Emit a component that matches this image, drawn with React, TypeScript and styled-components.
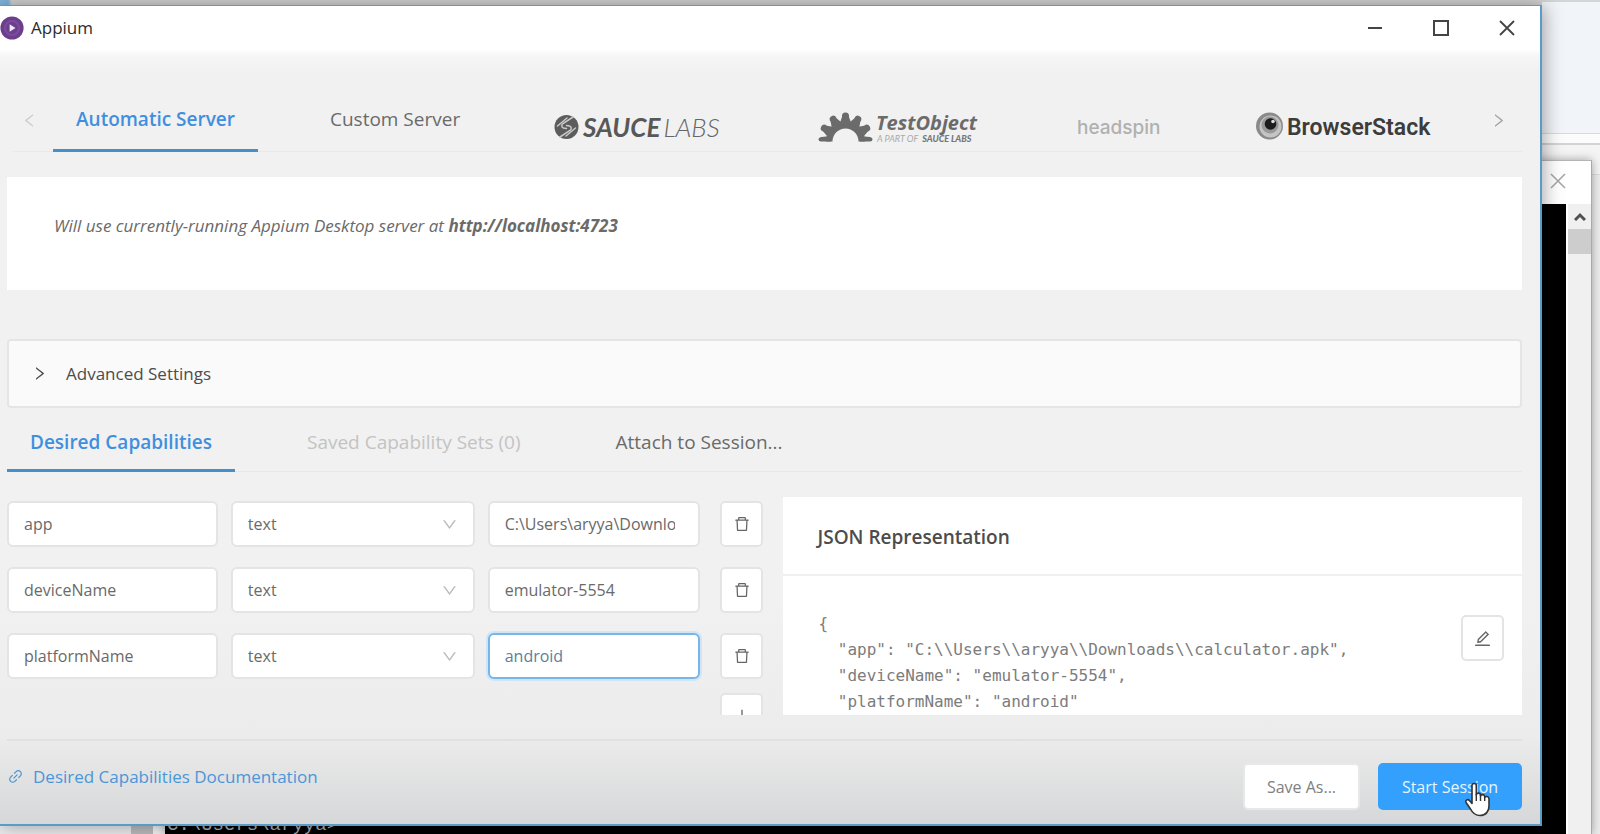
import React from "react";
import styled, { createGlobalStyle, css } from "styled-components";
import {
  AiOutlineDelete,
  AiOutlineDown,
  AiOutlineEdit,
  AiOutlineLeft,
  AiOutlineLink,
  AiOutlinePlus,
  AiOutlineRight,
} from "react-icons/ai";

const GlobalStyle = createGlobalStyle`
  *, *::before, *::after { box-sizing: border-box; }
  body {
    margin: 0;
    overflow: hidden;
    font-family: "Open Sans", "Noto Sans", sans-serif;
    font-size: 16px;
    color: #6a6a6a;
  }
  button, input, select { font: inherit; color: inherit; }
  h2, p, pre { margin: 0; }
`;

const Desktop = styled.div`
  position: relative;
  height: 100vh;
  min-height: 700px;
  padding: 5px 58px 8px 0;
  overflow: hidden;
  background: linear-gradient(#d3d5d6 0 2px, #f1f4f8 2px 133px, #d9dadb 133px 134px, #fcfcfc 134px 143px, #d2d3d4 143px 145px, #f4f4f4 145px 174px, #dcdcdc 174px 175px, #ececec 175px);
`;

const TopStrip = styled.div`
  position: absolute;
  inset: 0 58px auto 0;
  height: 5px;
  background: linear-gradient(90deg, #7fb4dc 0 8px, #d4d4d4 12px);
`;

const BackPane = styled.div`
  position: absolute;
  left: 0;
  bottom: 0;
  width: 165px;
  height: 12px;
  background: linear-gradient(90deg, #e9ebec 0 131px, #b9bbbc 131px 153px, #f4f4f4 153px);
`;

const ConsoleWindow = styled.section`
  position: absolute;
  inset: 160px 8px 0 165px;
  display: flex;
  flex-direction: column;
  background: #fff;
  border-top: 1px solid #b5b5b5;
  border-right: 1px solid #a9a9a9;
  box-shadow: 0 0 9px rgba(0, 0, 0, 0.35);
`;

const ConsoleTitle = styled.div`
  display: flex;
  justify-content: flex-end;
  align-items: center;
  height: 43px;
  padding: 0 24px 4px 0;
  color: #a5a5a5;
`;

const ConsoleBody = styled.div`
  flex: 1;
  display: flex;
  min-height: 0;
`;

const ConsoleScreen = styled.div`
  flex: 1;
  display: flex;
  align-items: flex-end;
  padding-left: 2px;
  background: #000;
  color: #a5adb5;
  font: 19px/17px "Liberation Mono", monospace;
`;

const ConsoleScroll = styled.div`
  width: 25px;
  background: #f0f0f0;
  border-left: 2px solid #fff;
  color: #505050;
`;

const ScrollArrow = styled.div`
  display: grid;
  place-items: center;
  height: 25px;
`;

const ScrollThumb = styled.div`
  height: 25px;
  background: #cdcdcd;
`;

const BareButton = styled.button`
  display: grid;
  place-items: center;
  padding: 0;
  border: 0;
  background: none;
`;

const AppWindow = styled.main`
  position: relative;
  display: flex;
  flex-direction: column;
  height: 100%;
  border: solid #5b9bc8;
  border-width: 1px 2px 2px 0;
  background: linear-gradient(#fff 0 43px, #f6f6f6 50px, #f1f1f1 66px, #f1f1f1 600px, #ececec 730px, #d6d7d8 100%);
  box-shadow: 2px 0 18px rgba(0, 0, 0, 0.35);
`;

const TitleBar = styled.header`
  display: flex;
  align-items: center;
  justify-content: space-between;
  height: 43px;
  color: #2c2c2c;
  font-size: 17px;
`;

const AppName = styled.div`
  display: flex;
  align-items: center;
  gap: 7px;
`;

const WindowControls = styled.div`
  display: flex;
  ${BareButton} {
    width: 66px;
    height: 40px;
  }
`;

const Content = styled.div`
  flex: 1;
  display: flex;
  flex-direction: column;
  min-height: 0;
  padding: 24px 18px 14px 7px;
`;

const ServerBar = styled.nav`
  display: flex;
  height: 79px;
  margin: 0 0 25px 6px;
  border-bottom: 1px solid #e9e9e9;
`;

const Arrow = styled(BareButton)<{ $faded?: boolean }>`
  flex: none;
  width: 32px;
  height: 94px;
  color: ${(p) => (p.$faded ? "#ccc" : "#a2a2a2")};
  &:last-child { margin-right: 8px; }
`;

const TabList = styled.div`
  flex: 1;
  display: flex;
  gap: 49px;
  min-width: 0;
`;

const Tab = styled.button<{ $active?: boolean; $muted?: boolean }>`
  flex: none;
  display: flex;
  align-items: flex-start;
  padding: 22px 23px 0;
  border: 0;
  border-bottom: 3px solid transparent;
  background: none;
  font-size: 19px;
  line-height: 24px;
  white-space: nowrap;
  color: ${(p) => (p.$muted ? "#c3c3c3" : "#6a6a6a")};
  ${(p) =>
    p.$active &&
    css`
      color: #3f8fe0;
      font-weight: 600;
      border-bottom-color: #4590c8;
    `}
`;

const ServerTabs = styled(TabList)`
  margin-left: 8px;
  ${Tab} { height: 79px; padding-top: 34px; }
`;

const LogoTab = styled(Tab)`
  && { padding-top: 39px; }
  svg { display: block; overflow: visible; }
`;

const InfoCard = styled.section`
  flex: none;
  height: 113px;
  padding: 36px 47px;
  background: #fff;
  font-size: 17px;
  line-height: 26px;
  font-style: italic;
`;

const Advanced = styled.button`
  flex: none;
  display: flex;
  align-items: center;
  gap: 18px;
  height: 69px;
  margin-top: 49px;
  padding: 0 22px;
  border: 2px solid #e5e5e5;
  border-radius: 4px;
  background: #fafafa;
  font-size: 17px;
  text-align: left;
  color: #4c4c4c;
`;

const CapabilityTabs = styled(TabList)`
  flex: none;
  height: 64px;
  margin-bottom: 25px;
  border-bottom: 1px solid #e6e9e9;
  ${Tab} { height: 64px; }
`;

const Panels = styled.div`
  flex: 1;
  display: grid;
  grid-template-columns: minmax(0, 757fr) minmax(0, 739fr);
  gap: 20px;
  min-height: 0;
  overflow: hidden;
`;

const CapabilityForm = styled.form`
  display: flex;
  flex-direction: column;
  gap: 14px;
  padding-top: 4px;
`;

const CapabilityRows = styled.div`
  display: grid;
  gap: 20px;
`;

const CapabilityRow = styled.div`
  display: grid;
  grid-template-columns: 211fr 244fr 212fr 51fr;
  column-gap: 13px;
`;

const fieldBox = css`
  width: 100%;
  min-width: 0;
  height: 46px;
  padding: 0 23px 0 15px;
  border: 2px solid #e4e4e4;
  border-radius: 6px;
  outline: 0;
  background: #fff;
  font-size: 16px;
`;

const TextField = styled.input<{ $focused?: boolean }>`
  ${fieldBox}
  ${(p) =>
    p.$focused &&
    css`
      border-color: #79b5e6;
      box-shadow: 0 0 0 2px #cfe6f9;
      color: #5b7f9c;
    `}
`;

const SelectWrap = styled.div`
  display: grid;
  align-items: center;
  min-width: 0;
  > * { grid-area: 1 / 1; }
  svg {
    justify-self: end;
    margin-right: 17px;
    color: #bbb;
    pointer-events: none;
  }
`;

const SelectField = styled.select`
  ${fieldBox}
  appearance: none;
`;

const IconButton = styled(BareButton)`
  flex: none;
  width: 43px;
  height: 46px;
  border: 2px solid #e4e4e4;
  border-radius: 5px;
  background: #fff;
  color: #666;
`;

const EditButton = styled(IconButton)`
  margin-top: 4px;
`;

const RowAction = styled.div`
  display: flex;
  justify-content: flex-end;
`;

const JsonCard = styled.section`
  min-width: 0;
  background: #fff;
`;

const JsonTitle = styled.h2`
  height: 79px;
  padding: 27px 34px 0;
  border-bottom: 2px solid #f0f0f0;
  font-size: 19px;
  line-height: 26px;
  font-weight: 600;
  color: #4c4c4c;
`;

const JsonBody = styled.div`
  display: flex;
  justify-content: space-between;
  padding: 35px 18px 0 35px;
`;

const Code = styled.pre`
  font: 16px/26px "DejaVu Sans Mono", monospace;
  color: #7c7c7c;
`;

const Footer = styled.footer`
  flex: none;
  display: flex;
  align-items: center;
  gap: 18px;
  margin-top: 24px;
  padding-top: 22px;
  border-top: 2px solid #e1e1e1;
`;

const DocLink = styled.a`
  display: flex;
  align-items: center;
  gap: 9px;
  margin: 0 auto 20px 0;
  color: #4a96d9;
  font-size: 17px;
  line-height: 24px;
  text-decoration: none;
`;

const ActionButton = styled.button<{ $primary?: boolean }>`
  position: relative;
  width: ${(p) => (p.$primary ? 144 : 117)}px;
  height: 47px;
  padding: 0;
  border: 2px solid ${(p) => (p.$primary ? "#35a0fb" : "#e8e8e8")};
  border-radius: 5px;
  background: ${(p) => (p.$primary ? "#34a0fd" : "#fff")};
  color: ${(p) => (p.$primary ? "#e6f4ff" : "#808080")};
  font-size: 16px;
  white-space: nowrap;
`;

const HandCursor = styled.svg`
  position: absolute;
  left: 84px;
  top: 17px;
`;

const AppiumMark = () => (
  <svg width="24" height="24" viewBox="0 0 24 24" aria-hidden="true">
    <circle cx="12" cy="12" r="11.6" fill="#6b3f8e" />
    <circle cx="12" cy="12" r="7" fill="none" stroke="#7a4c9b" strokeWidth="2" />
    <path d="M9.6 8.300 15.500 12l-5.900 3.700z" fill="#f0e6f5" />
  </svg>
);

const SauceLogo = () => (
  <svg width="169" height="32" viewBox="0 0 169 32" role="img" aria-label="Sauce Labs">
    <circle cx="11.500" cy="15" r="12" fill="#5c5c5c" />
    <g fill="none" stroke="#c9c9c9" strokeWidth="1.500" strokeLinecap="round">
      <path d="M18 5 8 11.500c-2 1.500-1.500 4 .5 4.500l3 .5" />
      <path d="M5 25l10-6.500c2-1.500 1.500-4-.5-4.500l-3-.5" />
      <path d="M2.500 14 12 6" />
      <path d="M20.500 16 11 24" />
    </g>
    <text x="28" y="25" fontFamily="Lato, sans-serif" fontSize="26" fontWeight="700" fontStyle="italic" fill="#585858">
      SAUCE<tspan dx="3" fontWeight="300" fill="#666">LABS</tspan>
    </text>
  </svg>
);

const TestObjectLogo = () => {
  const teeth = [-60, -30, 0, 30, 60];
  return (
    <svg width="163" height="32" viewBox="0 0 163 32" role="img" aria-label="TestObject, a part of Sauce Labs">
      <g fill="#6b6b6b">
        <path d="M7 29.500a19.500 19.500 0 0 1 39 0h-6.500a13 13 0 0 0-26 0z" />
        {teeth.map((a) => (
          <path key={a} d="M20.500 12l2.500-7q-.5-4.500 3.500-4.500t3.500 4.500l2.500 7z" transform={`rotate(${a} 26.500 28.500)`} />
        ))}
        <path d="M12 29.500H2q-2.500 0-2.500-2t3-2.500l9-1zM41 29.500h10q2.500 0 2.500-2t-3-2.500l-9-1z" />
      </g>
      <text x="57" y="18" fontFamily="Open Sans, sans-serif" fontSize="20" fontWeight="700" fontStyle="italic" fill="#6b6b6b">TestObject</text>
      <text x="58" y="30" fontFamily="Lato, sans-serif" fontSize="9" fontStyle="italic" fill="#aaa">
        A PART OF<tspan dx="4" fontWeight="900" fill="#777">SAUCE LABS</tspan>
      </text>
    </svg>
  );
};

const HeadspinLogo = () => (
  <svg width="84" height="32" viewBox="0 0 84 32" role="img" aria-label="headspin">
    <text x="0" y="22" fontFamily="Inter, sans-serif" fontSize="19" fontWeight="500" fill="#b0b0b0">headspin</text>
  </svg>
);

const BrowserStackLogo = () => (
  <svg width="174" height="32" viewBox="0 0 174 32" role="img" aria-label="BrowserStack">
    <circle cx="13.500" cy="14" r="13.500" fill="#8a8a8a" />
    <circle cx="14.500" cy="14.500" r="11" fill="#c4c4c4" />
    <circle cx="14" cy="13" r="8.500" fill="#989898" />
    <circle cx="14.500" cy="12" r="5.800" fill="#1c1c1c" />
    <circle cx="17" cy="9.500" r="1.800" fill="#ddd" />
    <text x="31" y="23" fontFamily="Roboto, sans-serif" fontSize="23" fontWeight="600" fill="#3c3c3c">BrowserStack</text>
  </svg>
);

const capabilities = [
  { name: "app", value: "C:\\Users\\aryya\\Downloads\\calculator.apk" },
  { name: "deviceName", value: "emulator-5554" },
  { name: "platformName", value: "android" },
];

const json = JSON.stringify(
  Object.fromEntries(capabilities.map((c) => [c.name, c.value])),
  null,
  2
);

export default function App() {
  return (
    <Desktop>
      <GlobalStyle />
      <TopStrip />
      <BackPane />
      <ConsoleWindow aria-label="Command prompt">
        <ConsoleTitle>
          <BareButton aria-label="Close console">
            <svg width="18" height="18" viewBox="0 0 18 18" stroke="currentColor" strokeWidth="1.500">
              <path d="M2 2l14 14M16 2 2 16" />
            </svg>
          </BareButton>
        </ConsoleTitle>
        <ConsoleBody>
          <ConsoleScreen>C:\Users\aryya&gt;</ConsoleScreen>
          <ConsoleScroll>
            <ScrollArrow>
              <svg width="12" height="9" viewBox="0 0 12 9" fill="none" stroke="currentColor" strokeWidth="3">
                <path d="M1 8l5-5 5 5" />
              </svg>
            </ScrollArrow>
            <ScrollThumb />
          </ConsoleScroll>
        </ConsoleBody>
      </ConsoleWindow>

      <AppWindow>
        <TitleBar>
          <AppName>
            <AppiumMark />
            Appium
          </AppName>
          <WindowControls>
            <BareButton aria-label="Minimize">
              <svg width="16" height="16" stroke="#444" strokeWidth="2"><path d="M1 8h14" /></svg>
            </BareButton>
            <BareButton aria-label="Maximize">
              <svg width="16" height="16" stroke="#444" strokeWidth="2" fill="none"><path d="M1 1h14v14H1z" /></svg>
            </BareButton>
            <BareButton aria-label="Close">
              <svg width="16" height="16" stroke="#444" strokeWidth="1.800"><path d="M1 1l14 14M15 1 1 15" /></svg>
            </BareButton>
          </WindowControls>
        </TitleBar>

        <Content>
          <ServerBar>
            <Arrow $faded aria-label="Previous servers"><AiOutlineLeft size={17} /></Arrow>
            <ServerTabs>
              <Tab $active>Automatic Server</Tab>
              <Tab>Custom Server</Tab>
              <LogoTab><SauceLogo /></LogoTab>
              <LogoTab><TestObjectLogo /></LogoTab>
              <LogoTab><HeadspinLogo /></LogoTab>
              <LogoTab><BrowserStackLogo /></LogoTab>
            </ServerTabs>
            <Arrow aria-label="More servers"><AiOutlineRight size={17} /></Arrow>
          </ServerBar>

          <InfoCard>
            <p>Will use currently-running Appium Desktop server at <b>http://localhost:4723</b></p>
          </InfoCard>

          <Advanced>
            <AiOutlineRight size={17} />
            Advanced Settings
          </Advanced>

          <CapabilityTabs>
            <Tab $active>Desired Capabilities</Tab>
            <Tab $muted>Saved Capability Sets (0)</Tab>
            <Tab>Attach to Session...</Tab>
          </CapabilityTabs>

          <Panels>
            <CapabilityForm>
              <CapabilityRows>
                {capabilities.map((c) => (
                  <CapabilityRow key={c.name}>
                    <TextField aria-label="Capability name" defaultValue={c.name} />
                    <SelectWrap>
                      <SelectField aria-label="Capability type" defaultValue="text">
                        <option>text</option>
                      </SelectField>
                      <AiOutlineDown size={17} />
                    </SelectWrap>
                    <TextField aria-label="Capability value" defaultValue={c.value} $focused={c.value === "android"} />
                    <RowAction>
                      <IconButton type="button" aria-label="Delete capability"><AiOutlineDelete size={18} /></IconButton>
                    </RowAction>
                  </CapabilityRow>
                ))}
              </CapabilityRows>
              <RowAction>
                <IconButton type="button" aria-label="Add capability"><AiOutlinePlus size={18} /></IconButton>
              </RowAction>
            </CapabilityForm>

            <JsonCard>
              <JsonTitle>JSON Representation</JsonTitle>
              <JsonBody>
                <Code>{json}</Code>
                <EditButton aria-label="Edit JSON"><AiOutlineEdit size={19} /></EditButton>
              </JsonBody>
            </JsonCard>
          </Panels>

          <Footer>
            <DocLink href="#docs">
              <AiOutlineLink size={17} />
              Desired Capabilities Documentation
            </DocLink>
            <ActionButton>Save As...</ActionButton>
            <ActionButton $primary>
              Start Session
              <HandCursor width="28" height="36" viewBox="0 0 28 36" aria-hidden="true">
                <path
                  d="M8 3.500C8 .8 12.300.8 12.300 3.500V13c0-2.500 4-2.500 4.200 0v1c.5-2 4-1.800 4.200.5v1c.8-1.800 4.300-1.200 4.300 1.500v7c0 5-3 9.500-9 9.500-5 0-7.500-2.500-9.500-6.500L2 20.500c-1-2.300 1.800-4 3.500-2l2.500 3z"
                  fill="#fff"
                  stroke="#333"
                  strokeWidth="1.600"
                  strokeLinejoin="round"
                />
                <path d="M12.300 12v7M16.500 13v6M20.700 14.500V19" stroke="#333" strokeWidth="1.400" />
              </HandCursor>
            </ActionButton>
          </Footer>
        </Content>
      </AppWindow>
    </Desktop>
  );
}
